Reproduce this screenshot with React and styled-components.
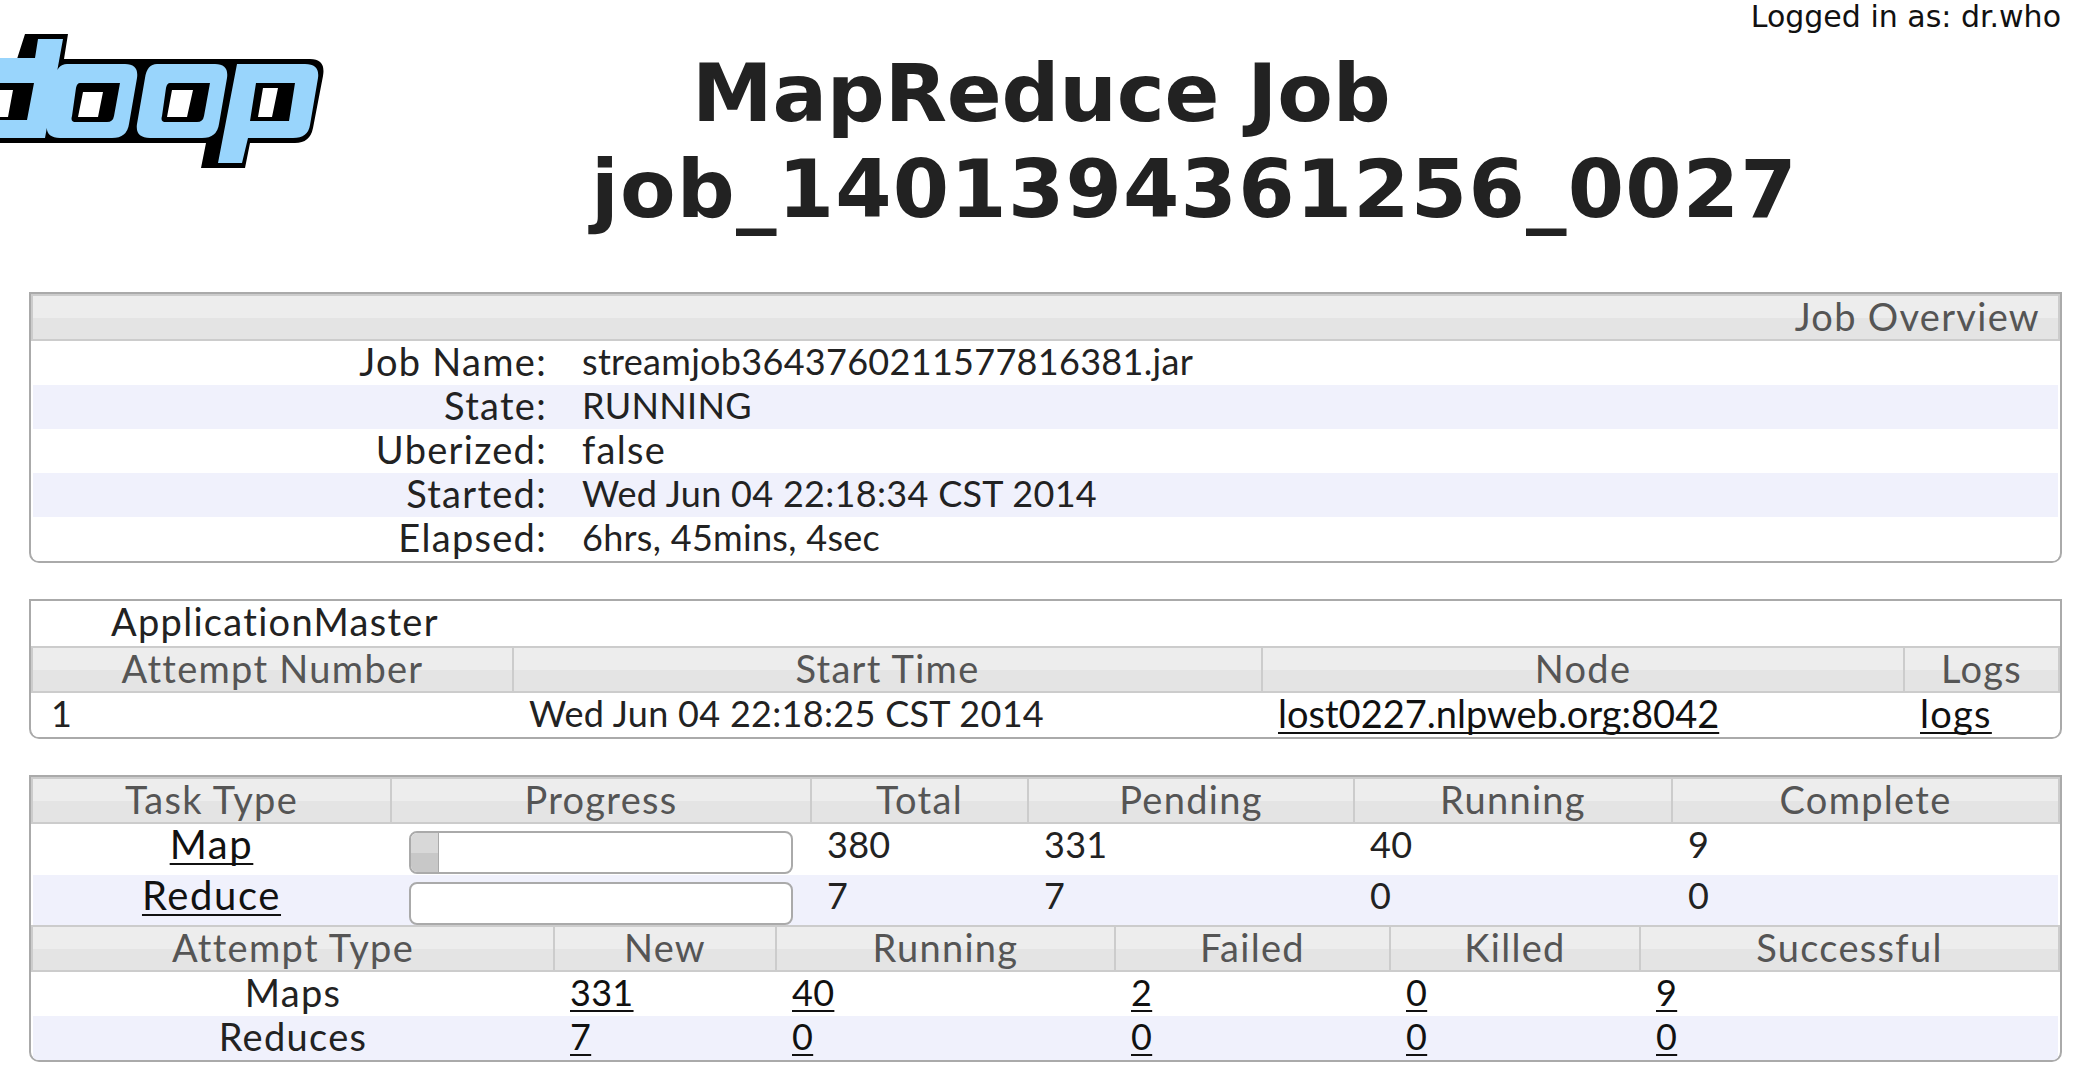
import React from "react";
import styled, { createGlobalStyle, css } from "styled-components";

const GlobalStyle = createGlobalStyle`
   html, body {
      margin: 0;
      padding: 0;
      background: #fff;
      overflow: hidden;
   }
   body {
      font-family: "Lato", "Liberation Sans", sans-serif;
      color: #222;
   }
`;

// the original font is wider than Lato, and words and digits differ by how much
const kinds = {
   word: css`
      font-size: 38px;
      letter-spacing: 1.3px;
   `,
   num: css`
      font-size: 36px;
      letter-spacing: 0.3px;
   `,
   wide: css`
      font-size: 38px;
   `,
   name: css`
      font-size: 40px;
      letter-spacing: 1.6px;
   `,
};

const Page = styled.div`
   width: 2074px;
   height: 1068px;
   overflow: hidden;
`;
const Login = styled.div`
   display: flex;
   justify-content: flex-end;
   height: 32px;
   padding-right: 13px;
   font-family: "DejaVu Sans", sans-serif;
   font-size: 30px;
   line-height: 33px;
   color: #111;
`;
const Masthead = styled.div`
   display: flex;
   height: 260px;
`;
const Logo = styled.svg`
   flex: none;
   margin-top: -32px;
   width: 330px;
   height: 200px;
`;
const Heading = styled.h1`
   margin: 13px 0 0 0;
   font-family: "DejaVu Sans", sans-serif;
   font-size: 81px;
   line-height: 96px;
   font-weight: 700;
   color: #222;
`;
const HeadingLine = styled.div`
   padding-left: ${(p) => p.$indent};
   letter-spacing: ${(p) => p.$spacing};
   white-space: nowrap;
`;
const Panel = styled.div`
   margin: 0 12px 36px 29px;
   border: 2px solid #aaa;
   border-radius: 0 0 10px 10px;
   overflow: hidden;
`;
const HeadRow = styled.div`
   box-sizing: border-box;
   display: grid;
   grid-template-columns: ${(p) => p.$cols};
   height: 47px;
   border: 2px solid #ccc;
   background: linear-gradient(#ededed 52%, #e4e4e4 52%);
`;
const HeadCell = styled.div`
   ${kinds.word};
   box-sizing: border-box;
   border-left: ${(p) => (p.$first ? "0" : "2px solid #ccc")};
   color: #555;
   text-align: ${(p) => p.$align || "center"};
   padding-right: ${(p) => p.$pad || "0"};
   line-height: 40px;
   white-space: nowrap;
`;
const Row = styled.div`
   display: grid;
   grid-template-columns: ${(p) => p.$cols};
   height: ${(p) => p.$h || "44px"};
   line-height: 41px;
   margin: 0 2px;
   background: ${(p) => (p.$odd ? "#f0f1fc" : "#fff")};
`;
const Cell = styled.div`
   ${(p) => kinds[p.$kind || "word"]};
   text-align: ${(p) => p.$align || "left"};
   padding: ${(p) => p.$pad || "0"};
   white-space: nowrap;
`;
const Caption = styled.div`
   ${kinds.word};
   height: 45px;
   line-height: 40px;
   padding-left: 80px;
`;
const TextLink = styled.a`
   color: #111;
   text-decoration: underline;
   text-decoration-thickness: 2px;
   text-underline-offset: 4px;
   text-decoration-skip-ink: none;
`;
const Bar = styled.div`
   box-sizing: border-box;
   height: 43px;
   margin-top: 7px;
   border: 2px solid #aaa;
   border-radius: 8px;
   background: #fff;
   overflow: hidden;
`;
const BarFill = styled.div`
   height: 100%;
   background: linear-gradient(#d8d8d8 50%, #c8c8c8 50%);
   border-right: ${(p) => (p.$empty ? "0" : "1px solid #aaa")};
`;

const overview = [
   ["Job Name:", "streamjob3643760211577816381.jar"],
   ["State:", "RUNNING"],
   ["Uberized:", "false", "word"],
   ["Started:", "Wed Jun 04 22:18:34 CST 2014"],
   ["Elapsed:", "6hrs, 45mins, 4sec"],
];
const overviewCols = "514px 1fr";
const amCols = "479px 749px 642px 1fr";
const taskCols = "357px 420px 217px 326px 318px 1fr";
const attemptCols = "520px 222px 339px 275px 250px 1fr";

const tasks = [
   { name: "Map", fill: 7, h: "51px", nums: ["380", "331", "40", "9"] },
   { name: "Reduce", fill: 0, h: "50px", nums: ["7", "7", "0", "0"] },
];
const attempts = [
   ["Maps", "331", "40", "2", "0", "9"],
   ["Reduces", "7", "0", "0", "0", "0"],
];

function HadoopLogo() {
   return (
      <Logo viewBox="0 0 330 200">
         <path
            d="M-10 59 H17 L25 34 H68 L64 59 H310 Q326 59 323 76 L313 128 Q310 143 295 143 H250 L245 168 H201 L206 143 H-10 Z"
            fill="#000"
         />
         <path
            d="M-10 58 H35 L38 39 H63 L45 138 H-10 Z M67 64 H125 Q139 64 137 78 L129 124 Q127 138 112 138 H60 Q45 138 47 124 L55 78 Q57 64 67 64 Z M157 64 H215 Q229 64 227 78 L219 124 Q217 138 202 138 H150 Q135 138 137 124 L145 78 Q147 64 157 64 Z M237 64 H305 Q320 64 318 78 L310 125 Q308 138 293 138 H248 L242 163 H218 Z"
            fill="#99d5fc"
         />
         <path
            d="M-10 83 H34 L27 120 H-10 Z M80 83 H120 L114 116 Q113 122 107 122 H76 Q70 122 72 116 L76 88 Q77 83 80 83 Z M170 83 H210 L204 116 Q203 122 197 122 H166 Q160 122 162 116 L166 88 Q167 83 170 83 Z M256 83 H295 L289 121 H250 Z"
            fill="#000"
         />
         <path
            d="M-10 90 H13 L8 117 H-10 Z M83 92 H103 L98 117 H78 Z M172 90 H193 L187 117 H167 Z M263 88 H278 L272 117 H258 Z"
            fill="#fff"
         />
      </Logo>
   );
}

export default function App() {
   return (
      <Page>
         <GlobalStyle />
         <Login>Logged in as: dr.who</Login>
         <Masthead>
            <HadoopLogo />
            <Heading>
               <HeadingLine $indent="362px" $spacing="-0.2px">MapReduce Job</HeadingLine>
               <HeadingLine $indent="261px" $spacing="1.2px">job_1401394361256_0027</HeadingLine>
            </Heading>
         </Masthead>
         <Panel>
            <HeadRow $cols="1fr">
               <HeadCell $first $align="right" $pad="18px">Job Overview</HeadCell>
            </HeadRow>
            {overview.map(([label, value, kind], i) => (
               <Row key={label} $cols={overviewCols} $odd={i % 2 === 1}>
                  <Cell $align="right">{label}</Cell>
                  <Cell $kind={kind || "num"} $pad="0 0 0 35px">{value}</Cell>
               </Row>
            ))}
         </Panel>
         <Panel>
            <Caption>ApplicationMaster</Caption>
            <HeadRow $cols={amCols}>
               <HeadCell $first>Attempt Number</HeadCell>
               <HeadCell>Start Time</HeadCell>
               <HeadCell>Node</HeadCell>
               <HeadCell>Logs</HeadCell>
            </HeadRow>
            <Row $cols={amCols}>
               <Cell $kind="num" $pad="0 0 0 18px">1</Cell>
               <Cell $kind="num" $pad="0 0 0 17px">Wed Jun 04 22:18:25 CST 2014</Cell>
               <Cell $kind="wide" $pad="0 0 0 17px"><TextLink>lost0227.nlpweb.org:8042</TextLink></Cell>
               <Cell $pad="0 0 0 17px"><TextLink>logs</TextLink></Cell>
            </Row>
         </Panel>
         <Panel>
            <HeadRow $cols={taskCols}>
               <HeadCell $first>Task Type</HeadCell>
               <HeadCell>Progress</HeadCell>
               <HeadCell>Total</HeadCell>
               <HeadCell>Pending</HeadCell>
               <HeadCell>Running</HeadCell>
               <HeadCell>Complete</HeadCell>
            </HeadRow>
            {tasks.map((t, i) => (
               <Row key={t.name} $cols={taskCols} $h={t.h} $odd={i % 2 === 1}>
                  <Cell $kind="name" $align="center"><TextLink>{t.name}</TextLink></Cell>
                  <Cell $pad="0 17px 0 19px">
                     <Bar>
                        <BarFill $empty={t.fill === 0} style={{ width: `${t.fill}%` }} />
                     </Bar>
                  </Cell>
                  {t.nums.map((n, j) => (
                     <Cell key={j} $kind="num" $pad="0 0 0 17px">{n}</Cell>
                  ))}
               </Row>
            ))}
            <HeadRow $cols={attemptCols}>
               <HeadCell $first>Attempt Type</HeadCell>
               <HeadCell>New</HeadCell>
               <HeadCell>Running</HeadCell>
               <HeadCell>Failed</HeadCell>
               <HeadCell>Killed</HeadCell>
               <HeadCell>Successful</HeadCell>
            </HeadRow>
            {attempts.map(([name, ...nums], i) => (
               <Row key={name} $cols={attemptCols} $odd={i % 2 === 1}>
                  <Cell $align="center">{name}</Cell>
                  {nums.map((n, j) => (
                     <Cell key={j} $kind="num" $pad="0 0 0 17px"><TextLink>{n}</TextLink></Cell>
                  ))}
               </Row>
            ))}
         </Panel>
      </Page>
   );
}
